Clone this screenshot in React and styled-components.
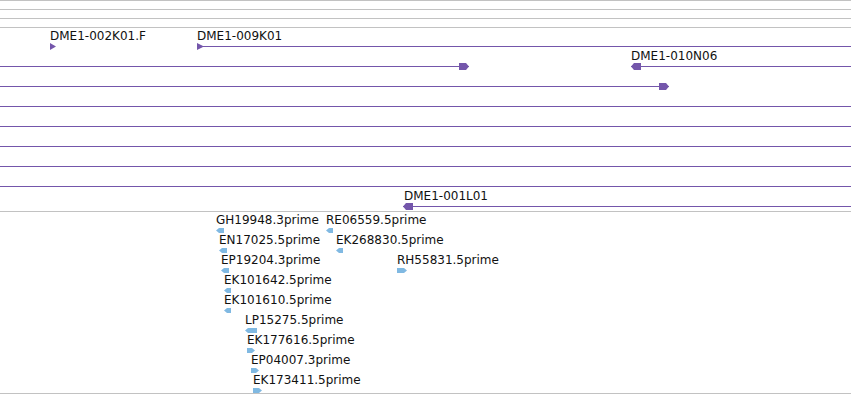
import React from "react";
import styled, { createGlobalStyle } from "styled-components";

const PURPLE = "#7456ab";
const BLUE = "#80b9e2";
const GRAY = "#c2c2c2";
const PAGE_W = 851;

const Global = createGlobalStyle`
  html, body { margin: 0; padding: 0; background: #fff; }
  body { font-family: "DejaVu Sans", "Liberation Sans", sans-serif; }
`;

const Page = styled.div`
  width: ${PAGE_W}px;
  height: 395px;
  overflow: hidden;
  background: #fff;
  display: flex;
  flex-direction: column;
`;

const Rule = styled.div`
  height: 1px;
  flex: none;
  background: ${GRAY};
  margin-top: ${(p) => p.$before || 0}px;
  margin-bottom: ${(p) => p.$after || 0}px;
`;

const Track = styled.div`
  display: flex;
  flex-direction: column;
  flex: none;
`;

const Lane = styled.div`
  position: relative;
  height: 20px;
  flex: none;
`;

const FeatureBox = styled.div`
  position: absolute;
  top: 0;
  height: 20px;
`;

const Label = styled.span`
  position: absolute;
  top: 1px;
  white-space: nowrap;
  font-size: 12px;
  line-height: 14px;
  color: #111;
`;

const Glyph = styled.svg`
  position: absolute;
  left: 0;
  top: ${(p) => p.$top}px;
  display: block;
  overflow: visible;
`;

function headPoints(type, w, h) {
  const m = h / 2;
  if (type === "tri") return `0,0 ${w},${m} 0,${h}`;
  if (type === "start-tri") return `0,0 7,${m} 0,${h}`;
  if (type === "end-right") return `${w - 10},0 ${w - 3},0 ${w},${m} ${w - 3},${h} ${w - 10},${h}`;
  if (type === "start-left") return `0,${m} 3,0 10,0 10,${h} 3,${h}`;
  if (type === "left") return `0,${m} 3,0 ${w},0 ${w},${h} 3,${h}`;
  if (type === "right") return `0,0 ${w - 3},0 ${w},${m} ${w - 3},${h} 0,${h}`;
  return null;
}

function Feature({ f, color, top, h, line }) {
  const x0 = Math.max(f.start, 0);
  const x1 = Math.min(f.end, PAGE_W + 20);
  const w = x1 - x0;
  const pts = f.head ? headPoints(f.head, w, h) : null;
  return (
    <FeatureBox style={{ left: x0, width: w }}>
      {f.label && <Label style={{ left: (f.labelX ?? f.start) - x0 }}>{f.label}</Label>}
      <Glyph $top={top} width={w} height={h} viewBox={`0 0 ${w} ${h}`}>
        {line && f.head !== "tri" && (
          <rect x="0" y={Math.floor(h / 2)} width={w} height="1" fill={color} />
        )}
        {pts && <polygon points={pts} fill={color} />}
      </Glyph>
    </FeatureBox>
  );
}

const upper = [
  [
    { start: 50, end: 56, label: "DME1-002K01.F", head: "tri" },
    { start: 197, end: 900, label: "DME1-009K01", head: "start-tri" },
  ],
  [
    { start: -10, end: 469, head: "end-right" },
    { start: 631, end: 900, label: "DME1-010N06", head: "start-left" },
  ],
  [{ start: -10, end: 669, head: "end-right" }],
  [{ start: -10, end: 900 }],
  [{ start: -10, end: 900 }],
  [{ start: -10, end: 900 }],
  [{ start: -10, end: 900 }],
  [{ start: -10, end: 900 }],
  [{ start: 403, end: 900, label: "DME1-001L01", labelX: 404, head: "start-left" }],
];

const lower = [
  [
    { start: 216, end: 224, label: "GH19948.3prime", head: "left" },
    { start: 326, end: 333, label: "RE06559.5prime", head: "left" },
  ],
  [
    { start: 219, end: 227, label: "EN17025.5prime", head: "left" },
    { start: 336, end: 343, label: "EK268830.5prime", head: "left" },
  ],
  [
    { start: 221, end: 229, label: "EP19204.3prime", head: "left" },
    { start: 397, end: 407, label: "RH55831.5prime", head: "right" },
  ],
  [{ start: 224, end: 231, label: "EK101642.5prime", head: "left" }],
  [{ start: 224, end: 231, label: "EK101610.5prime", head: "left" }],
  [{ start: 245, end: 257, label: "LP15275.5prime", head: "left" }],
  [{ start: 247, end: 255, label: "EK177616.5prime", head: "right" }],
  [{ start: 251, end: 259, label: "EP04007.3prime", head: "right" }],
  [{ start: 253, end: 262, label: "EK173411.5prime", head: "right" }],
];

export default function App() {
  return (
    <>
      <Global />
      <Page>
        <Rule $after={8} />
        <Rule $after={8} />
        <Rule $after={8} />
        <Rule />
        <Track>
          {upper.map((lane, i) => (
            <Lane key={i}>
              {lane.map((f, j) => (
                <Feature key={j} f={f} color={PURPLE} top={15} h={7} line />
              ))}
            </Lane>
          ))}
        </Track>
        <Rule $before={3} />
        <Track>
          {lower.map((lane, i) => (
            <Lane key={i}>
              {lane.map((f, j) => (
                <Feature key={j} f={f} color={BLUE} top={16} h={5} />
              ))}
            </Lane>
          ))}
        </Track>
        <Rule $before={1} />
      </Page>
    </>
  );
}
